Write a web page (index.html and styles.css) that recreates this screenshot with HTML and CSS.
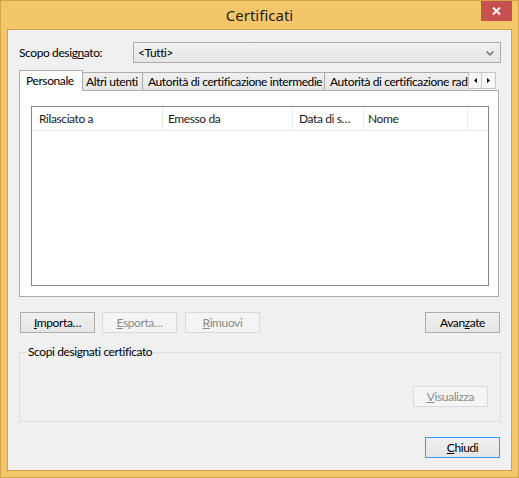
FILE: index.html
```html
<!DOCTYPE html>
<html lang="it">
<head>
<meta charset="utf-8">
<title>Certificati</title>
<link rel="stylesheet" href="styles.css">
</head>
<body>
<div class="window">
  <div class="titlebar">
    <span></span>
    <span class="title">Certificati</span>
    <span class="close"><svg width="9" height="8" viewBox="0 0 9 8"><path d="M1 0.5 L8 7.5 M8 0.5 L1 7.5" stroke="#ffffff" stroke-width="1.9" fill="none"/></svg></span>
  </div>
  <div class="client">
    <div class="scope-row">
      <span class="scope-label">Scopo desig<u>n</u>ato:</span>
      <div class="combo">
        <span>&lt;Tutti&gt;</span>
        <svg class="chev" width="8" height="5" viewBox="0 0 8 5"><path d="M0.6 0.6 L4 4 L7.4 0.6" stroke="#6d6d6d" stroke-width="1.4" fill="none"/></svg>
      </div>
    </div>
    <div class="tabstrip">
      <div class="tablist">
        <div class="tab active t1">Personale</div>
        <div class="tab t2">Altri utenti</div>
        <div class="tab t3">Autorità di certificazione intermedie</div>
        <div class="tab t4">Autorità di certificazione radice</div>
      </div>
      <div class="scroller">
        <span class="arr"><svg width="3" height="5" viewBox="0 0 3 5"><path d="M3 0 L0 2.5 L3 5 Z" fill="#000"/></svg></span>
        <span class="arr arr-r"><svg width="3" height="5" viewBox="0 0 3 5"><path d="M0 0 L3 2.5 L0 5 Z" fill="#000"/></svg></span>
      </div>
    </div>
    <div class="panel">
      <div class="list">
        <div class="header">
          <div class="col c1">Rilasciato a</div>
          <div class="col c2">Emesso da</div>
          <div class="col c3">Data di s…</div>
          <div class="col c4">Nome</div>
          <div class="col c5"></div>
        </div>
      </div>
    </div>
    <div class="actions">
      <button class="btn first"><u>I</u>mporta…</button>
      <button class="btn dis gap7" disabled><u>E</u>sporta…</button>
      <button class="btn dis gap8" disabled><u>R</u>imuovi</button>
      <span class="fill"></span>
      <button class="btn last">Avan<u>z</u>ate</button>
    </div>
    <fieldset class="group">
      <legend>Scopi designati certificato</legend>
      <div class="group-body">
        <button class="btn dis" disabled><u>V</u>isualizza</button>
      </div>
    </fieldset>
    <div class="footer">
      <button class="btn default last"><u>C</u>hiudi</button>
    </div>
  </div>
</div>
</body>
</html>
```

FILE: styles.css
```css
html, body {
  margin: 0;
  padding: 0;
  background: #ffffff;
}

body {
  font-family: Lato, "Noto Sans", "DejaVu Sans", sans-serif;
  font-size: 12px;
  letter-spacing: -0.4px;
  color: #000000;
}

.window {
  width: 519px;
  height: 478px;
  box-sizing: border-box;
  border: 1px solid #d3a447;
  background: #f3c769;
  padding: 0 6px 6px 6px;
  display: flex;
  flex-direction: column;
}

.titlebar {
  height: 28px;
  display: grid;
  grid-template-columns: 1fr auto 1fr;
  align-items: start;
}

.title {
  font-family: "Noto Sans", "DejaVu Sans", sans-serif;
  font-size: 15px;
  letter-spacing: normal;
  line-height: 29px;
  color: #1e1e1e;
}

.close {
  justify-self: end;
  width: 31px;
  height: 20px;
  background: #c75050;
  display: flex;
  align-items: center;
  justify-content: center;
}

.client {
  flex: 1;
  border: 1px solid #cfa24b;
  background: #f0f0f0;
  padding: 12px 10px 12px 11px;
  display: flex;
  flex-direction: column;
  min-height: 0;
}

u {
  text-decoration: underline;
  text-underline-offset: 1px;
}

.scope-row {
  display: flex;
  align-items: center;
  height: 21px;
}

.scope-label {
  width: 114px;
  flex: none;
}

.combo {
  flex: 1;
  height: 21px;
  box-sizing: border-box;
  border: 1px solid #acacac;
  background: linear-gradient(#f0f0f0, #e6e6e6);
  display: flex;
  align-items: center;
  justify-content: space-between;
  padding: 0 6px 0 4px;
}

.chev {
  margin-top: 1px;
}

/* tabs */
.tabstrip {
  margin-top: 7px;
  margin-right: 2px;
  height: 21px;
  margin-bottom: -1px;
  display: flex;
  align-items: flex-end;
  position: relative;
  z-index: 1;
}

.tablist {
  flex: 1;
  height: 21px;
  display: flex;
  align-items: flex-end;
  overflow: hidden;
  min-width: 0;
}

.tab {
  flex: none;
  box-sizing: border-box;
  height: 19px;
  border: 1px solid #acacac;
  border-left: none;
  background: linear-gradient(#f0f0f0, #e6e6e6);
  line-height: 17px;
  white-space: nowrap;
  overflow: hidden;
  padding: 0 0 0 5px;
}

.tab.active {
  height: 21px;
  border-left: 1px solid #acacac;
  border-bottom: none;
  background: #ffffff;
  line-height: 19px;
  padding-left: 6px;
}

.t1 { width: 64px; }
.t2 { width: 60px; padding-left: 3px; }
.t3 { width: 182px; }
.t4 { width: 200px; }

.scroller {
  flex: none;
  display: flex;
  margin: 0 3px 2px 0;
}

.arr {
  width: 14px;
  height: 17px;
  box-sizing: border-box;
  border: 1px solid #c8c8c8;
  background: #f6f6f6;
  display: flex;
  align-items: center;
  justify-content: center;
}

.arr-r {
  border-left: none;
}

.panel {
  height: 207px;
  box-sizing: border-box;
  margin-right: 2px;
  border: 1px solid #acacac;
  background: #ffffff;
  padding: 15px 9px 10px 11px;
}

.list {
  height: 180px;
  box-sizing: border-box;
  border: 1px solid #828790;
  background: #ffffff;
}

.header {
  height: 24px;
  box-sizing: border-box;
  border-bottom: 1px solid #e5ebf2;
  display: flex;
}

.col {
  box-sizing: border-box;
  border-right: 1px solid #e5ebf2;
  line-height: 23px;
  padding-left: 6px;
  white-space: nowrap;
  overflow: hidden;
  color: #1b1b1b;
}

.c1 { width: 131px; padding-left: 7px; }
.c2 { width: 130px; padding-left: 5px; }
.c3 { width: 71px; }
.c4 { width: 104px; padding-left: 4px; }
.c5 { flex: 1; border-right: none; }

/* buttons */
.actions {
  margin-top: 15px;
  display: flex;
  height: 21px;
}

.fill {
  flex: 1;
}

.btn {
  width: 75px;
  height: 21px;
  box-sizing: border-box;
  border: 1px solid #acacac;
  background: linear-gradient(#f0f0f0, #e5e5e5);
  font-family: inherit;
  font-size: 12px;
  letter-spacing: inherit;
  color: #000000;
  padding: 0;
  margin: 0;
  line-height: 18px;
  text-align: center;
}

.btn.dis {
  border-color: #d9d9d9;
  background: #f4f4f4;
  color: #8a8a8a;
}

.btn.default {
  border-color: #3399ff;
}

.first { margin-left: 1px; }
.gap7 { margin-left: 7px; }
.gap8 { margin-left: 8px; }
.last { margin-right: 1px; }

.group {
  margin: 11px 0 0 0;
  border: 1px solid #dcdcdc;
  padding: 26px 12px 14px 6px;
  min-width: 0;
}

.group legend {
  padding: 0 2px;
  line-height: 16px;
  color: #000000;
}

.group-body {
  display: flex;
  justify-content: flex-end;
}

.footer {
  margin-top: 15px;
  display: flex;
  justify-content: flex-end;
}
```
